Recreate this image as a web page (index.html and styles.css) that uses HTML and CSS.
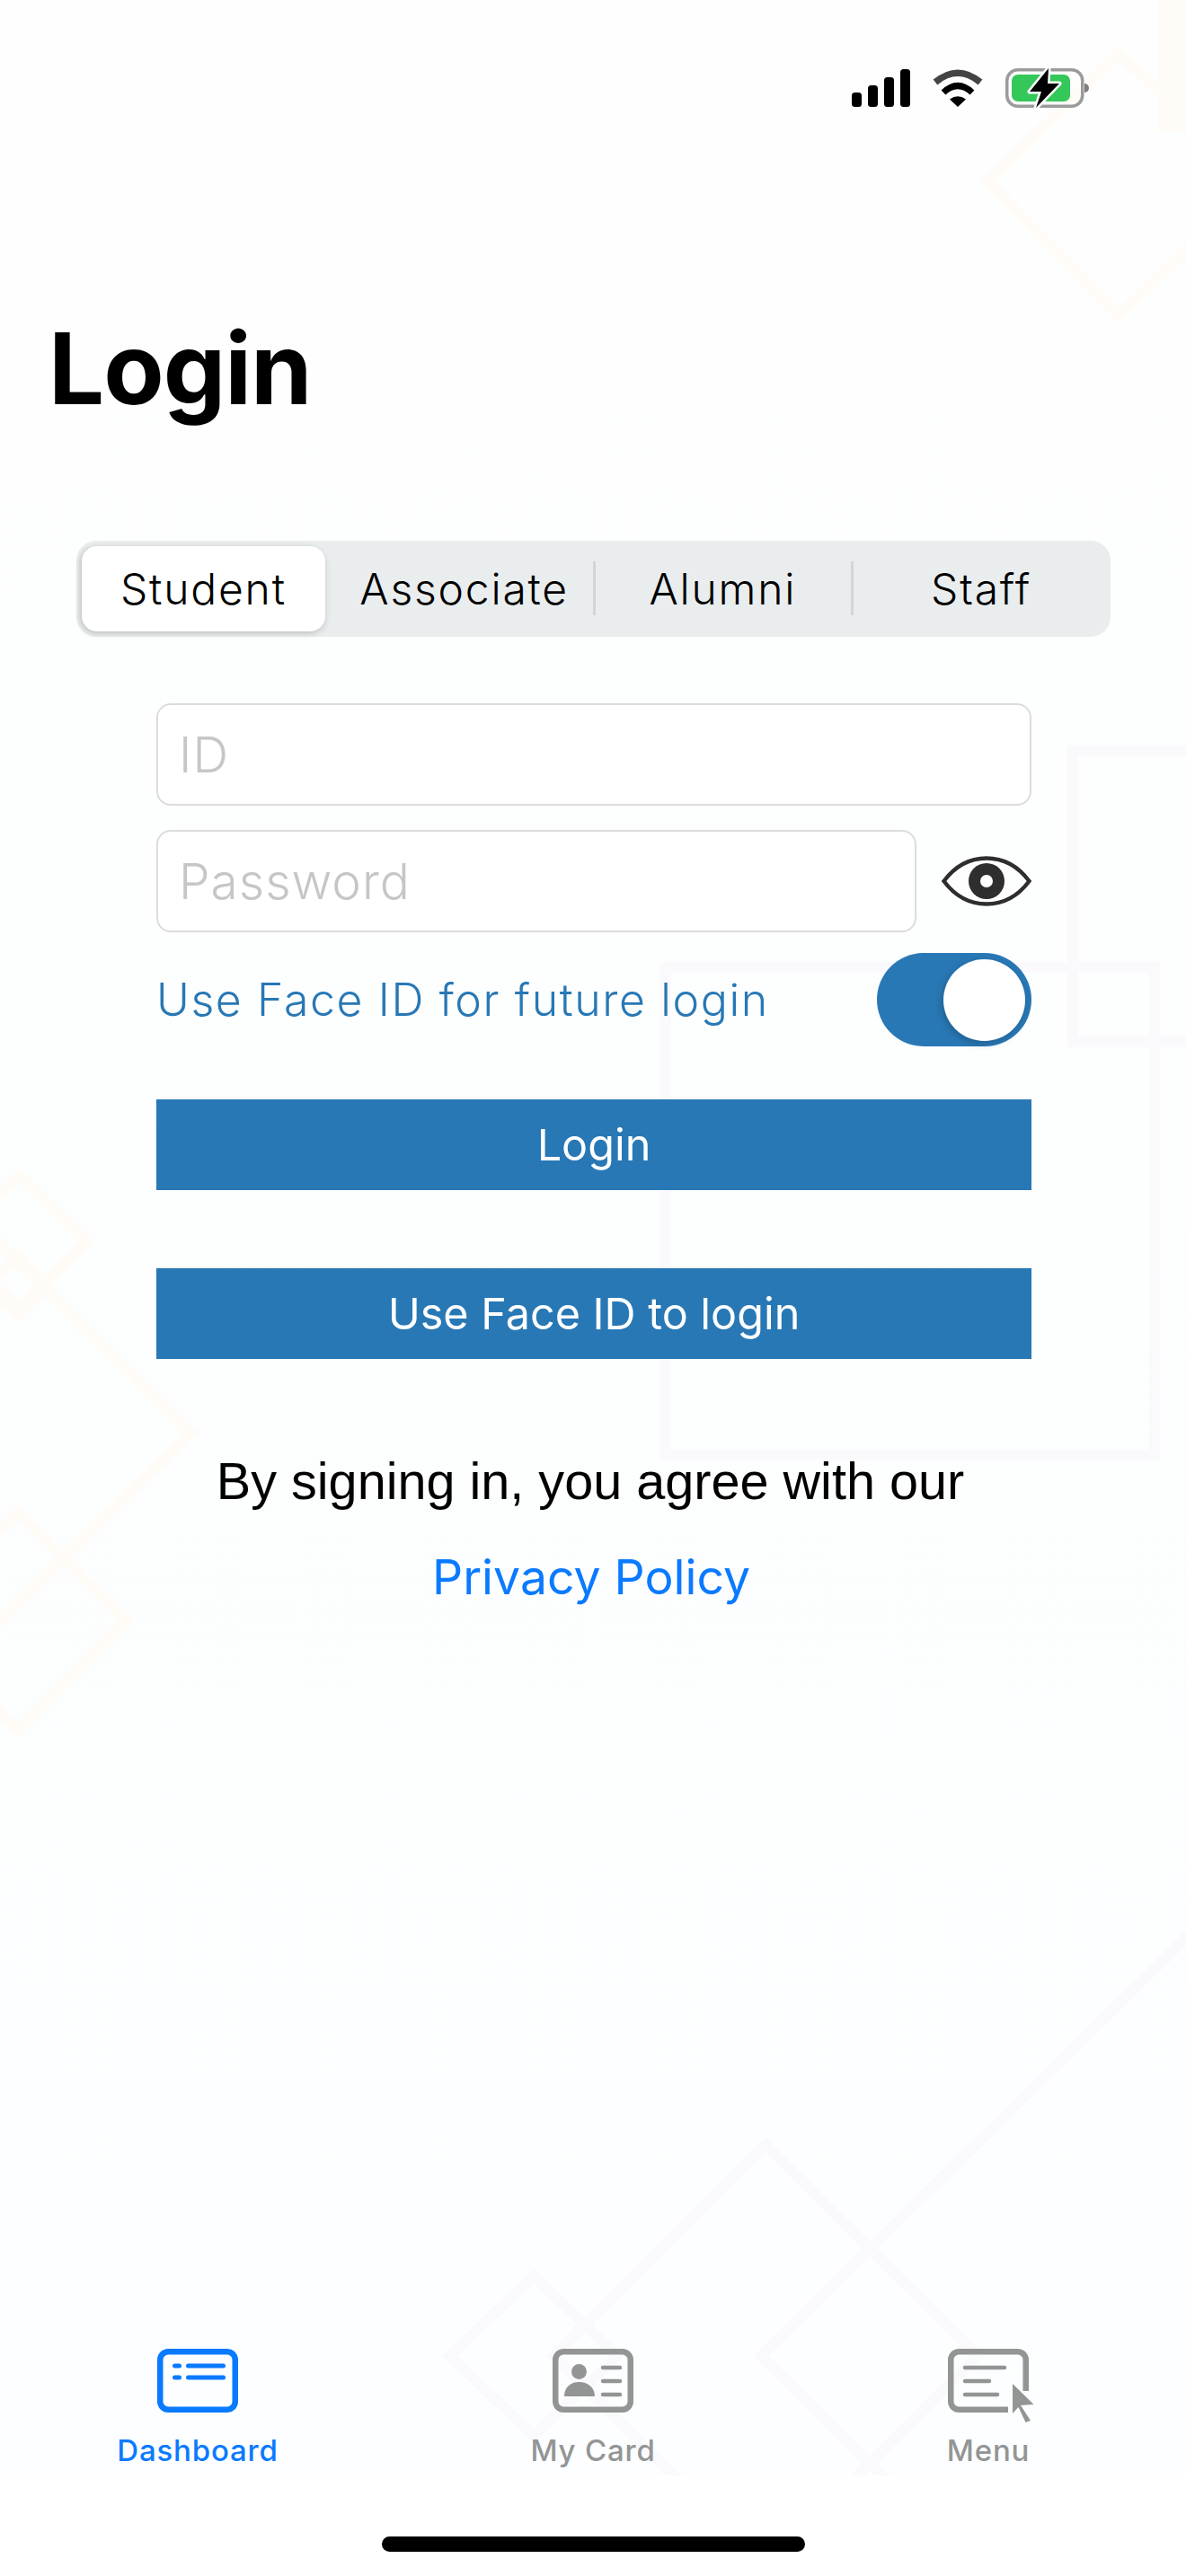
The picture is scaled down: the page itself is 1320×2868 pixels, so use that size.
FILE: index.html
```html
<!DOCTYPE html>
<html lang="en">
<head>
    <meta charset="UTF-8">
    <meta name="viewport" content="width=device-width, initial-scale=1.0">
    <title>Login</title>
    <link rel="stylesheet" href="styles.css">
</head>
<body>
    <div id="app">
        <div id="screen">
            <!-- faint background pattern -->
            <svg class="pattern" viewBox="0 0 1320 2756" width="1320" height="2756" aria-hidden="true">
                <g class="peach">
                    <polygon points="1099,202 1245,60 1400,202 1245,351"/>
                    <rect x="1295" y="-10" width="40" height="150"/>
                    <polygon points="22,1309 97,1382 22,1456 -60,1382"/>
                    <polygon points="21,1399 52,1432 21,1464 -16,1432"/>
                    <polygon points="212,1595 -20,1365 -260,1595 -20,1825"/>
                    <polygon points="20,1684 140,1804 20,1926 -106,1804"/>
                </g>
                <g class="lilac">
                    <rect x="741" y="1077" width="544" height="543"/>
                    <rect x="1194" y="836" width="140" height="324"/>
                    <polygon points="594,2534 687,2623 594,2712 501,2623"/>
                    <polygon points="852,2388 1088,2623 852,2858 616,2623"/>
                    <polygon points="1480,2000 2100,2623 1480,3246 847,2623"/>
                </g>
            </svg>

            <div class="status-bar">
                <svg class="st-signal" viewBox="0 0 65 42" width="65" height="42">
                    <rect x="0" y="26" width="11" height="16" rx="3.5"/>
                    <rect x="18" y="18" width="11" height="24" rx="3.5"/>
                    <rect x="36" y="9" width="11" height="33" rx="3.5"/>
                    <rect x="54" y="0" width="11" height="42" rx="3.5"/>
                </svg>
                <svg class="st-wifi" viewBox="0 0 56 42" width="56" height="42">
                    <path d="M3 14.5Q28 -6 53 14.5" fill="none" stroke="#444" stroke-width="7.5"/>
                    <path d="M12 26Q28 11 44 26" fill="none" stroke="#000" stroke-width="7"/>
                    <path d="M19 33.5Q28 27 37 33.5L28 42Z" fill="#000"/>
                </svg>
                <svg class="st-battery" viewBox="0 0 93 44" width="93" height="44">
                    <rect x="1.75" y="1.75" width="84" height="40.5" rx="12" fill="none" stroke="#9b9b9b" stroke-width="3.5"/>
                    <rect x="7" y="7" width="65" height="30" rx="7" fill="#34c759"/>
                    <path d="M88 17a5 5 0 0 1 0 10Z" fill="#7d7d7d"/>
                    <path d="M48 0L27 26H40L34 44L60 17H47Z" fill="#000" stroke="#fff" stroke-width="5" paint-order="stroke" stroke-linejoin="round"/>
                </svg>
            </div>

            <h1 class="page-title">Login</h1>

            <div class="segments">
                <div class="segment selected">Student</div>
                <div class="segment">Associate</div>
                <div class="segment divided">Alumni</div>
                <div class="segment divided">Staff</div>
            </div>

            <div class="login-form">
                <input class="field" type="text" placeholder="ID">
                <div class="password-row">
                    <input class="field" type="password" placeholder="Password">
                    <svg class="eye" viewBox="0 0 100 56" width="100" height="56">
                        <path d="M2.5 28C16 10 33 2.5 50 2.5S84 10 97.5 28C84 46 67 53.5 50 53.5S16 46 2.5 28Z" fill="none" stroke="#2e2e2e" stroke-width="4.5"/>
                        <circle cx="50" cy="28" r="20" fill="#2e2e2e"/>
                        <circle cx="50" cy="28" r="7" fill="#fff"/>
                    </svg>
                </div>
                <div class="faceid-row">
                    <span class="faceid-label">Use Face ID for future login</span>
                    <div class="toggle"><div class="thumb"></div></div>
                </div>
                <button class="btn">Login</button>
                <button class="btn second">Use Face ID to login</button>
            </div>

            <p class="agree">By signing in, you agree with our</p>
            <a class="privacy" href="#">Privacy Policy</a>

            <nav class="tab-bar">
                <div class="tab active">
                    <svg viewBox="0 0 90 71" width="90" height="71">
                        <rect x="3.25" y="3.25" width="83.5" height="64.5" rx="9" fill="none" stroke="currentColor" stroke-width="6.5"/>
                        <path d="M19.5 19h5M34.5 19h39M19.5 32h5M34.5 32h39" fill="none" stroke="currentColor" stroke-width="5" stroke-linecap="round"/>
                    </svg>
                    <span>Dashboard</span>
                </div>
                <div class="tab">
                    <svg viewBox="0 0 90 71" width="90" height="71">
                        <rect x="3.25" y="3.25" width="83.5" height="64.5" rx="9" fill="none" stroke="currentColor" stroke-width="6.5"/>
                        <circle cx="29.5" cy="25.5" r="8.5" fill="currentColor"/>
                        <path d="M13 53C13 43 20 37 29.5 37S47 43 47 53Z" fill="currentColor"/>
                        <path d="M56 21h19M56 36h19M56 51h19" fill="none" stroke="currentColor" stroke-width="4.5" stroke-linecap="round"/>
                    </svg>
                    <span>My Card</span>
                </div>
                <div class="tab">
                    <svg class="menu-icon" viewBox="0 0 90 71" width="90" height="71">
                        <path d="M67 67.75H12.25a9 9 0 0 1-9-9V12.25a9 9 0 0 1 9-9H77.75a9 9 0 0 1 9 9V47" fill="none" stroke="currentColor" stroke-width="6.5"/>
                        <path d="M19 21h44M19 36h27M19 51h36" fill="none" stroke="currentColor" stroke-width="4.5" stroke-linecap="round"/>
                        <path d="M72 39L95.5 62L81 63L92 80L86.5 82L78.5 65L72 72Z" fill="currentColor"/>
                    </svg>
                    <span>Menu</span>
                </div>
            </nav>
        </div>
        <div class="home-area"><div class="home-indicator"></div></div>
    </div>
</body>
</html>
```
FILE: styles.css
```css
* {
    box-sizing: border-box;
}

body {
    margin: 0;
    background-color: #fff;
    font-family: "Inter", "Liberation Sans", sans-serif;
}

#app {
    width: 1320px;
    height: 2868px;
    overflow: hidden;
}

#screen {
    position: relative;
    height: 2756px;
    background: linear-gradient(#fefefe, #fdfefe 30%, #fcfeff);
    display: flex;
    flex-direction: column;
    overflow: hidden;
}

#screen > * {
    position: relative;
}

#screen > .pattern {
    position: absolute;
    top: 0;
    left: 0;
}

.pattern polygon,
.pattern rect {
    fill: none;
    stroke-width: 12;
}

.peach polygon,
.peach rect {
    stroke: #fffbf6;
}

.peach rect {
    fill: #fffbf6;
}

.lilac polygon,
.lilac rect {
    stroke: #fafafd;
}

.status-bar {
    display: flex;
    justify-content: flex-end;
    align-items: center;
    height: 44px;
    margin-top: 76px;
    padding-right: 108px;
}

.st-signal {
    margin-right: 25px;
}

.st-wifi {
    margin-right: 25px;
}

.page-title {
    margin: 225px 0 0 54px;
    font-size: 110px;
    line-height: 130px;
    font-weight: 700;
    letter-spacing: -1px;
    color: #000;
}

.segments {
    display: grid;
    grid-template-columns: repeat(4, 1fr);
    width: 1151px;
    height: 107px;
    margin: 127px 0 0 85px;
    background-color: #eaedee;
    border-radius: 22px;
}

.segment {
    position: relative;
    display: flex;
    align-items: center;
    justify-content: center;
    font-size: 48px;
    font-weight: 300;
    letter-spacing: 1.8px;
    color: #000;
}

.segment.selected {
    margin: 6px 11px 6px 6px;
    background-color: #fff;
    border-radius: 17px;
    box-shadow: 0 3px 7px rgba(0, 0, 0, 0.14), -3px 0 5px rgba(0, 0, 0, 0.08);
}

.segment.divided::before {
    content: "";
    position: absolute;
    left: -1px;
    top: 23px;
    width: 3px;
    height: 60px;
    background-color: #d3d5d7;
}

.login-form {
    display: flex;
    flex-direction: column;
    width: 974px;
    margin: 74px 0 0 174px;
}

.field {
    width: 100%;
    height: 114px;
    padding: 0 23px;
    background-color: #fff;
    border: 2px solid #dcdcdc;
    border-radius: 16px;
    outline: none;
    font-family: "Inter", sans-serif;
    font-size: 55px;
    font-weight: 300;
    letter-spacing: 1px;
}

.field::placeholder {
    color: #c6c6c8;
    opacity: 1;
}

.password-row {
    display: flex;
    align-items: center;
    gap: 28px;
    margin-top: 27px;
}

.password-row .field {
    width: 846px;
}

.faceid-row {
    display: flex;
    align-items: center;
    justify-content: space-between;
    height: 104px;
    margin-top: 23px;
}

.faceid-label {
    font-size: 50px;
    font-weight: 300;
    letter-spacing: 1.6px;
    color: #2878b5;
}

.toggle {
    display: flex;
    justify-content: flex-end;
    align-items: center;
    width: 172px;
    height: 104px;
    padding-right: 7px;
    background-color: #2878b5;
    border-radius: 52px;
}

.thumb {
    width: 91px;
    height: 91px;
    background-color: #fff;
    border-radius: 50%;
    box-shadow: -2px 3px 8px rgba(0, 0, 0, 0.2);
}

.btn {
    display: block;
    width: 100%;
    height: 101px;
    margin-top: 59px;
    padding: 0;
    background-color: #2878b5;
    border: none;
    font-family: "Inter", sans-serif;
    font-size: 48.5px;
    color: #fff;
}

.btn.second {
    margin-top: 87px;
}

.agree {
    margin: 102px 0 0;
    padding-right: 6px;
    text-align: center;
    font-family: "Liberation Sans", Arial, sans-serif;
    font-size: 57.6px;
    line-height: 68px;
    color: #000;
}

.privacy {
    display: block;
    margin-top: 39px;
    padding-right: 4px;
    text-align: center;
    font-size: 53.5px;
    line-height: 68px;
    color: #0a7aff;
    text-decoration: none;
}

.tab-bar {
    display: grid;
    grid-template-columns: repeat(3, 1fr);
    margin-top: auto;
    height: 141px;
}

.tab {
    display: flex;
    flex-direction: column;
    align-items: center;
    color: #939595;
}

.tab.active {
    color: #0a7aff;
}

.tab svg {
    display: block;
    overflow: visible;
}

.tab span {
    margin-top: 22px;
    font-size: 33px;
    line-height: 40px;
    font-weight: 500;
    letter-spacing: 0.8px;
}

.home-area {
    height: 112px;
    padding: 68px 0 0 425px;
    background-color: #fff;
}

.home-indicator {
    width: 471px;
    height: 17px;
    background-color: #000;
    border-radius: 9px;
}
```
